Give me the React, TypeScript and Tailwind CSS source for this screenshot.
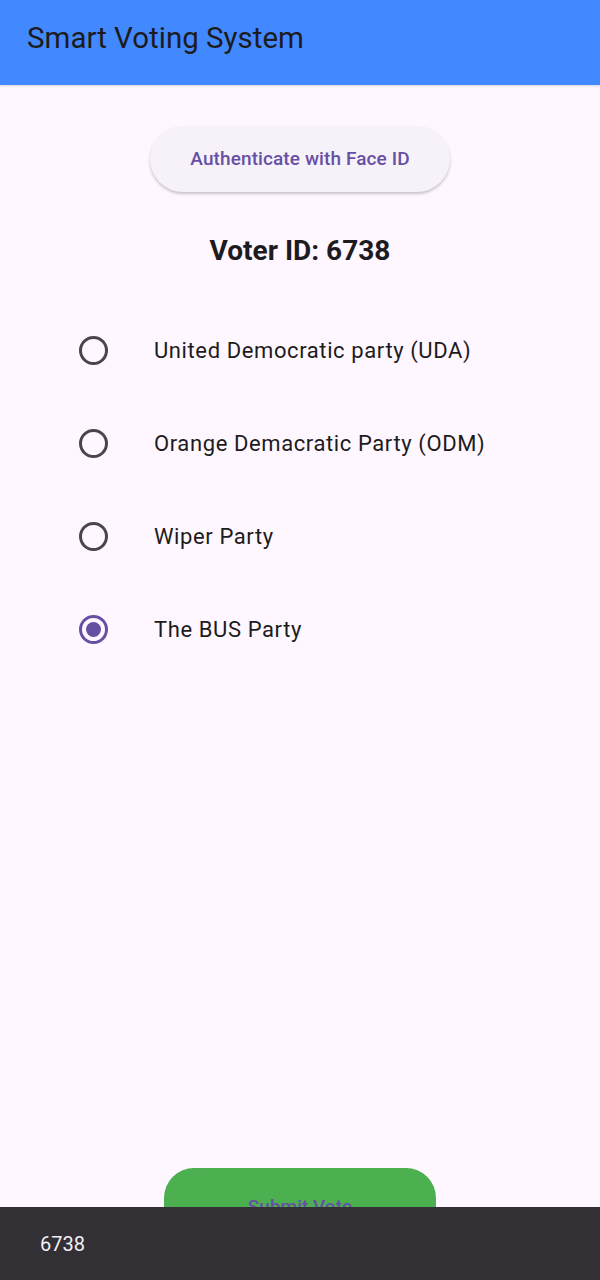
import { useState } from 'react';

const parties = [
  'United Democratic party (UDA)',
  'Orange Demacratic Party (ODM)',
  'Wiper Party',
  'The BUS Party',
];

function Radio({ checked }: { checked: boolean }) {
  return (
    <div
      className={
        checked
          ? 'w-[29px] h-[29px] shrink-0 rounded-full border-[3px] border-[#6750a4] flex items-center justify-center'
          : 'w-[29px] h-[29px] shrink-0 rounded-full border-[3px] border-[#49454f]'
      }
    >
      {checked && <div className="w-[15px] h-[15px] rounded-full bg-[#6750a4]" />}
    </div>
  );
}

export default function App() {
  const [selected, setSelected] = useState(3);

  return (
    <div className="relative h-[1280px] w-full overflow-hidden bg-[#fef7ff] flex flex-col font-['Roboto',sans-serif] text-[#1d1b20]">
      {/* app bar */}
      <header className="h-[85px] shrink-0 bg-[#4289ff] flex items-center px-[27px] shadow-[0_1px_2px_rgba(0,0,0,0.15)]">
        <h1 className="text-[29.5px] leading-none text-[#1d1b20] -mt-[8px]">Smart Voting System</h1>
      </header>

      <main className="flex-1 flex flex-col items-center">
        <button className="mt-[41px] h-[66px] w-[300px] rounded-full bg-[#f7f2fa] shadow-[0_2px_3px_rgba(0,0,0,0.22)] text-[#6750a4] text-[19px] font-medium tracking-[0.1px]">
          Authenticate with Face ID
        </button>

        <h2 className="mt-[43px] text-[28px] leading-[32px] font-bold">Voter ID: 6738</h2>

        <div className="mt-[37px] w-full flex flex-col">
          {parties.map((p, i) => (
            <button
              key={p}
              onClick={() => setSelected(i)}
              className="h-[93px] flex items-center pl-[79px] text-left"
            >
              <Radio checked={selected === i} />
              <span className="ml-[46px] text-[22px] tracking-[0.6px] text-[#1d1b20]">{p}</span>
            </button>
          ))}
        </div>

        <button className="mt-auto mb-[34px] h-[78px] w-[272px] rounded-[30px] bg-[#4caf50] text-[#6750a4] text-[19px] font-medium">
          Submit Vote
        </button>
      </main>

      {/* snackbar */}
      <div className="absolute left-0 right-0 bottom-0 h-[73px] bg-[#322f35] flex items-center px-[40px]">
        <span className="text-[20px] text-[#f5eff7]">6738</span>
      </div>
    </div>
  );
}
